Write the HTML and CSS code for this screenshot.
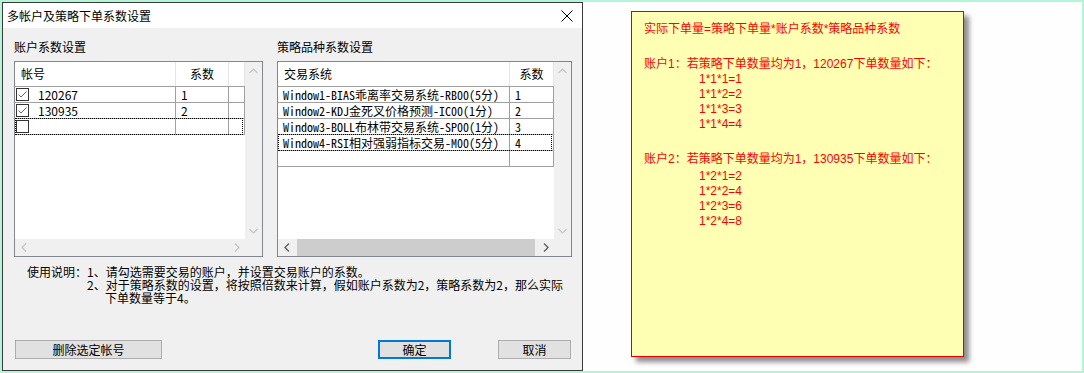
FILE: index.html
```html
<!DOCTYPE html>
<html lang="zh-CN">
<head>
<meta charset="utf-8">
<title>多帐户及策略下单系数设置</title>
<link rel="stylesheet" href="styles.css">
</head>
<body>
<div class="screen">
  <div class="dialog">
    <div class="titlebar">
      <span class="title">多帐户及策略下单系数设置</span>
      <svg class="close" width="12" height="12" viewBox="0 0 12 12"><path d="M0.5 0.5 L11.5 11.5 M11.5 0.5 L0.5 11.5" stroke="#000" stroke-width="1" fill="none"/></svg>
    </div>
    <div class="dlg-body">
      <div class="panels">
        <section class="panel panel-acc">
          <div class="group-label">账户系数设置</div>
          <div class="listview">
            <div class="lv-client">
              <div class="lv-header">
                <div class="hcell acc-name">帐号</div>
                <div class="hcell acc-coef center">系数</div>
                <div class="hcell acc-fill"></div>
              </div>
              <div class="lv-row">
                <div class="cell acc-name"><span class="chk"><svg width="13" height="13" viewBox="0 0 13 13"><path d="M2.5 6.5 L5 9 L10.5 3.5" stroke="#666" stroke-width="1" fill="none"/></svg></span><span class="acc-id">120267</span></div>
                <div class="cell acc-coef">1</div>
                <div class="cell acc-fill"></div>
              </div>
              <div class="lv-row">
                <div class="cell acc-name"><span class="chk"><svg width="13" height="13" viewBox="0 0 13 13"><path d="M2.5 6.5 L5 9 L10.5 3.5" stroke="#666" stroke-width="1" fill="none"/></svg></span><span class="acc-id">130935</span></div>
                <div class="cell acc-coef">2</div>
                <div class="cell acc-fill"></div>
              </div>
              <div class="lv-row focused">
                <div class="cell acc-name"><span class="chk"></span></div>
                <div class="cell acc-coef"></div>
                <div class="cell acc-fill"></div>
              </div>
            </div>
            <div class="vscroll">
              <span class="sb-btn"><svg width="9" height="6" viewBox="0 0 9 6"><path d="M0.5 5 L4.5 1 L8.5 5" stroke="#c5c5c5" stroke-width="1.2" fill="none"/></svg></span>
              <span class="sb-btn"><svg width="9" height="6" viewBox="0 0 9 6"><path d="M0.5 1 L4.5 5 L8.5 1" stroke="#c5c5c5" stroke-width="1.2" fill="none"/></svg></span>
            </div>
            <div class="hscroll">
              <span class="sb-btn"><svg width="6" height="9" viewBox="0 0 6 9"><path d="M5 0.5 L1 4.5 L5 8.5" stroke="#c5c5c5" stroke-width="1.2" fill="none"/></svg></span>
              <span class="sb-track"></span>
              <span class="sb-btn"><svg width="6" height="9" viewBox="0 0 6 9"><path d="M1 0.5 L5 4.5 L1 8.5" stroke="#c5c5c5" stroke-width="1.2" fill="none"/></svg></span>
            </div>
            <div class="corner"></div>
          </div>
        </section>
        <section class="panel panel-sys">
          <div class="group-label">策略品种系数设置</div>
          <div class="listview">
            <div class="lv-client">
              <div class="lv-header">
                <div class="hcell sys-name">交易系统</div>
                <div class="hcell sys-coef center">系数</div>
              </div>
              <div class="lv-row mono">
                <div class="cell sys-name">Window1-BIAS乖离率交易系统-RB00(5分)</div>
                <div class="cell sys-coef">1</div>
              </div>
              <div class="lv-row mono">
                <div class="cell sys-name">Window2-KDJ金死叉价格预测-IC00(1分)</div>
                <div class="cell sys-coef">2</div>
              </div>
              <div class="lv-row mono">
                <div class="cell sys-name">Window3-BOLL布林带交易系统-SP00(1分)</div>
                <div class="cell sys-coef">3</div>
              </div>
              <div class="lv-row mono focused">
                <div class="cell sys-name">Window4-RSI相对强弱指标交易-M00(5分)</div>
                <div class="cell sys-coef">4</div>
              </div>
              <div class="lv-row mono">
                <div class="cell sys-name"></div>
                <div class="cell sys-coef"></div>
              </div>
            </div>
            <div class="vscroll">
              <span class="sb-btn"><svg width="9" height="6" viewBox="0 0 9 6"><path d="M0.5 5 L4.5 1 L8.5 5" stroke="#c5c5c5" stroke-width="1.2" fill="none"/></svg></span>
              <span class="sb-btn"><svg width="9" height="6" viewBox="0 0 9 6"><path d="M0.5 1 L4.5 5 L8.5 1" stroke="#c5c5c5" stroke-width="1.2" fill="none"/></svg></span>
            </div>
            <div class="hscroll">
              <span class="sb-btn"><svg width="6" height="9" viewBox="0 0 6 9"><path d="M5 0.5 L1 4.5 L5 8.5" stroke="#606060" stroke-width="1.4" fill="none"/></svg></span>
              <span class="sb-track"><span class="sb-thumb"></span></span>
              <span class="sb-btn"><svg width="6" height="9" viewBox="0 0 6 9"><path d="M1 0.5 L5 4.5 L1 8.5" stroke="#606060" stroke-width="1.4" fill="none"/></svg></span>
            </div>
            <div class="corner"></div>
          </div>
        </section>
      </div>

      <div class="usage">
        <span class="usage-label">使用说明：</span>
        <div class="usage-lines">
          <div class="usage-line">1、请勾选需要交易的账户，并设置交易账户的系数。</div>
          <div class="usage-line">2、对于策略系数的设置，将按照倍数来计算，假如账户系数为2，策略系数为2，那么实际</div>
          <div class="usage-line cont">下单数量等于4。</div>
        </div>
      </div>

      <div class="buttons">
        <button class="btn btn-wide">删除选定帐号</button>
        <span class="spacer"></span>
        <button class="btn btn-default">确定</button>
        <button class="btn">取消</button>
      </div>
    </div>
  </div>

  <div class="canvas">
    <div class="note">
      <div class="note-line">实际下单量=策略下单量*账户系数*策略品种系数</div>
      <div class="note-block">
        <div class="note-line">账户1：若策略下单数量均为1，120267下单数量如下：</div>
        <div class="note-line formula">1*1*1=1</div>
        <div class="note-line formula">1*1*2=2</div>
        <div class="note-line formula">1*1*3=3</div>
        <div class="note-line formula">1*1*4=4</div>
      </div>
      <div class="note-block">
        <div class="note-line">账户2：若策略下单数量均为1，130935下单数量如下：</div>
        <div class="note-line formula first">1*2*1=2</div>
        <div class="note-line formula">1*2*2=4</div>
        <div class="note-line formula">1*2*3=6</div>
        <div class="note-line formula">1*2*4=8</div>
      </div>
    </div>
  </div>
</div>
</body>
</html>
```

FILE: styles.css
```css
* { box-sizing: border-box; }

html, body {
  margin: 0;
  padding: 0;
}

body {
  width: 1084px;
  height: 373px;
  overflow: hidden;
  background: #b3f5d6;
  font-family: "Noto Sans CJK SC", "Liberation Sans", sans-serif;
  font-size: 12px;
  color: #000;
}

.screen {
  display: flex;
  height: 373px;
  padding: 2px;
}

/* ---------- dialog ---------- */
.dialog {
  width: 581px;
  height: 369px;
  border: 1px solid #3a3a3a;
  background: #f0f0f0;
  display: flex;
  flex-direction: column;
  flex: none;
}

.titlebar {
  height: 25px;
  background: #fff;
  display: flex;
  align-items: center;
  justify-content: space-between;
  padding: 0 9px 0 4px;
  flex: none;
}

.title {
  font-size: 12px;
  line-height: 16px;
}

.close { display: block; margin-top: 1px; }

.dlg-body {
  flex: 1;
  display: flex;
  flex-direction: column;
  padding: 11px 10px 11px 11px;
}

.panels {
  display: flex;
  gap: 14px;
}

.panel-acc { width: 249px; }
.panel-sys { width: 295px; }

.group-label {
  line-height: 16px;
  height: 16px;
  margin-bottom: 6px;
}

/* ---------- list view ---------- */
.listview {
  height: 196px;
  border: 1px solid #828790;
  background: #fff;
  display: grid;
  grid-template-columns: 1fr 17px;
  grid-template-rows: 1fr 17px;
}

.lv-client {
  overflow: hidden;
  background: #fff;
}

.lv-header {
  display: flex;
  height: 25px;
  border-bottom: 1px solid #a0a0a0;
  background: #fff;
}

.hcell {
  height: 24px;
  line-height: 24px;
  padding-left: 6px;
  border-right: 1px solid #e5e5e5;
  white-space: nowrap;
  flex: none;
}
.hcell.center { text-align: center; padding-left: 0; }

.lv-row {
  display: flex;
  height: 16px;
  border-bottom: 1px solid #a0a0a0;
  position: relative;
}

.lv-row.focused::after {
  content: "";
  position: absolute;
  left: 0;
  right: 2px;
  top: -1px;
  bottom: -1px;
  border: 1px dotted #000;
}

.cell {
  height: 15px;
  line-height: 15px;
  padding-left: 5px;
  border-right: 1px solid #a0a0a0;
  white-space: nowrap;
  overflow: hidden;
  flex: none;
  display: flex;
  align-items: center;
}

.acc-name { width: 161px; }
.acc-coef { width: 53px; }
.acc-fill { flex: 1; }
.lv-row .acc-name { padding-left: 1px; }

.sys-name { width: 232px; }
.sys-coef { flex: 1; }

.mono .cell {
  font-family: "Noto Sans Mono CJK SC", "Liberation Mono", "Noto Sans CJK SC", monospace;
  font-size: 12px;
}

.chk {
  width: 13px;
  height: 13px;
  border: 1px solid #333;
  background: #fff;
  display: flex;
  align-items: center;
  justify-content: center;
  flex: none;
}
.chk svg { display: block; margin: -1px; }

.acc-id { margin-left: 9px; }

/* ---------- scrollbars ---------- */
.vscroll {
  background: #f0f0f0;
  display: flex;
  flex-direction: column;
  justify-content: space-between;
}

.hscroll {
  background: #f0f0f0;
  display: flex;
  align-items: stretch;
}

.sb-btn {
  width: 17px;
  height: 17px;
  display: flex;
  align-items: center;
  justify-content: center;
  flex: none;
}

.sb-track {
  flex: 1;
  display: flex;
  align-items: center;
  padding: 0 2px;
}

.sb-thumb {
  flex: 1;
  height: 17px;
  background: #cdcdcd;
}

.corner { background: #f0f0f0; }

/* ---------- usage text ---------- */
.usage {
  display: flex;
  margin-top: 8px;
  margin-left: 13px;
  line-height: 13px;
}

.usage-label { flex: none; }

.usage-line { white-space: nowrap; }
.usage-line.cont { padding-left: 18px; }

/* ---------- buttons ---------- */
.buttons {
  margin-top: auto;
  display: flex;
  align-items: center;
  padding: 0 1px;
}

.spacer { flex: 1; }

.btn {
  height: 19px;
  width: 73px;
  padding: 0;
  margin: 0;
  border: 1px solid #adadad;
  background: #e1e1e1;
  font-family: "Noto Sans CJK SC", sans-serif;
  font-size: 12px;
  line-height: 16px;
  color: #000;
}

.btn-wide { width: 147px; }

.btn-default {
  border: 2px solid #0078d7;
  margin-right: 47px;
}

/* ---------- right canvas ---------- */
.canvas {
  flex: 1;
  background: #fefefe;
  padding: 9px 0 0 48px;
}

.note {
  width: 333px;
  height: 346px;
  border: 1px solid #e00000;
  background: #ffffb4;
  box-shadow: 5px 5px 5px rgba(0, 0, 0, 0.45);
  padding: 10px 12px;
  color: #ff0000;
  font-family: "Liberation Sans", "Noto Sans CJK SC", sans-serif;
  font-size: 12px;
}

.note-line {
  height: 15px;
  line-height: 15px;
  white-space: nowrap;
}

.note-block { margin-top: 20px; }

.formula { padding-left: 55px; }
.formula.first { margin-top: 2px; }
```
